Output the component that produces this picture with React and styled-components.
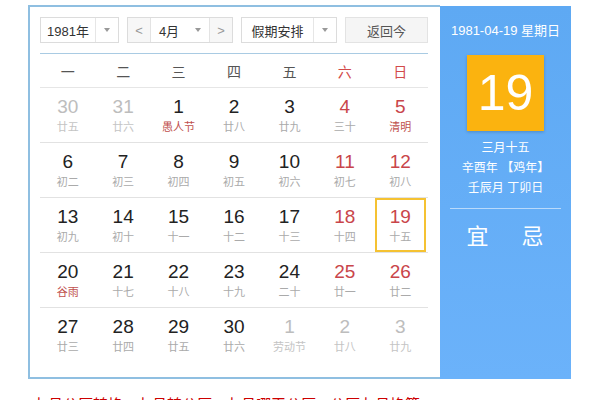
import React from 'react';
import styled, { createGlobalStyle } from 'styled-components';

const Global = createGlobalStyle`
  body {
    margin: 0;
    background: #fff;
    font-family: "Liberation Sans", Arial, "Noto Sans CJK SC", sans-serif;
  }
`;

const Page = styled.div`
  width: 600px;
  height: 400px;
  overflow: hidden;
  padding: 5px 0 0 28px;
  box-sizing: border-box;
`;

const Calendar = styled.div`
  display: flex;
  width: 543px;
  height: 374px;
`;

const Main = styled.div`
  width: 412px;
  box-sizing: border-box;
  border: 2px solid #8fbfe1;
  border-right: none;
  padding: 10px 12px 0 10px;
  background: #fff;
`;

const Toolbar = styled.div`
  display: flex;
  justify-content: space-between;
  height: 26px;
  padding-bottom: 10px;
  border-bottom: 1px solid #a9cbe3;
`;

const Select = styled.div`
  display: flex;
  width: ${p => p.w}px;
  height: 26px;
  box-sizing: border-box;
  border: 1px solid #dcdcdc;
  background: #fff;
  font-size: 13px;
  color: #333;
`;

const SelectText = styled.div`
  flex: 1;
  display: flex;
  align-items: center;
  justify-content: center;
`;

const Arrow = styled.div`
  width: 22px;
  display: flex;
  align-items: center;
  justify-content: center;
  border-left: ${p => (p.plain ? 'none' : '1px solid #e6e6e6')};
  &::after {
    content: '';
    border-left: 3px solid transparent;
    border-right: 3px solid transparent;
    border-top: 4px solid #999;
  }
`;

const Step = styled.div`
  width: 22px;
  display: flex;
  align-items: center;
  justify-content: center;
  background: #f7f7f7;
  color: #999;
  font-size: 13px;
  border-${p => p.side}: 1px solid #e3e3e3;
`;

const Button = styled.div`
  width: 83px;
  height: 26px;
  box-sizing: border-box;
  border: 1px solid #e3e3e3;
  background: #f5f5f5;
  color: #555;
  font-size: 13px;
  display: flex;
  align-items: center;
  justify-content: center;
`;

const Grid = styled.div`
  display: grid;
  grid-template-columns: repeat(7, 1fr);
`;

const WeekHead = styled(Grid)`
  height: 33px;
  border-bottom: 1px solid #e6e6e6;
`;

const WeekDay = styled.div`
  display: flex;
  align-items: center;
  justify-content: center;
  font-size: 14px;
  color: ${p => (p.red ? '#d24a4a' : '#555')};
`;

const Row = styled(Grid)`
  height: 55px;
  border-bottom: ${p => (p.last ? 'none' : '1px solid #e2e2e2')};
  box-sizing: border-box;
`;

const Cell = styled.div`
  display: flex;
  flex-direction: column;
  align-items: center;
  justify-content: center;
  margin: 0 2px;
  box-sizing: border-box;
  border: 2px solid ${p => (p.selected ? '#f5c232' : 'transparent')};
`;

const Num = styled.div`
  font-size: 19px;
  line-height: 22px;
  color: ${p => (p.tone === 'off' ? '#bdbdbd' : p.tone === 'red' ? '#c9454a' : '#222')};
`;

const Lunar = styled.div`
  font-size: 11px;
  line-height: 16px;
  margin-top: 1px;
  color: ${p => (p.red ? '#c0504d' : p.tone === 'off' ? '#c4c4c4' : '#aaa')};
`;

const Side = styled.div`
  width: 131px;
  margin-top: 1px;
  background: linear-gradient(#5ea9f3, #6bb2fa);
  display: flex;
  flex-direction: column;
  align-items: center;
  padding-top: 17px;
  box-sizing: border-box;
  color: #fff;
`;

const DateLine = styled.div`
  font-size: 13px;
  line-height: 16px;
`;

const BigDay = styled.div`
  width: 77px;
  height: 76px;
  margin-top: 16px;
  background: #fbb30f;
  box-shadow: 0 1px 3px rgba(0, 0, 0, 0.2);
  display: flex;
  align-items: center;
  justify-content: center;
  font-size: 50px;
  color: #fff;
`;

const LunarInfo = styled.div`
  margin-top: 7px;
  font-size: 12px;
  line-height: 20px;
  text-align: center;
`;

const Divider = styled.div`
  width: 111px;
  height: 1px;
  margin-top: 10px;
  background: rgba(255, 255, 255, 0.55);
`;

const Advice = styled.div`
  display: flex;
  gap: 32px;
  margin-top: 13px;
  font-size: 22px;
  line-height: 30px;
  letter-spacing: 1px;
`;

const Links = styled.div`
  display: flex;
  gap: 14px;
  margin: 14px 0 0 5px;
  font-size: 15px;
  color: #c00;
  white-space: nowrap;
`;

const weeks = [
  [
    ['30', '廿五', 'off'], ['31', '廿六', 'off'], ['1', '愚人节', '', true], ['2', '廿八'],
    ['3', '廿九'], ['4', '三十', 'red'], ['5', '清明', 'red', true],
  ],
  [
    ['6', '初二'], ['7', '初三'], ['8', '初四'], ['9', '初五'], ['10', '初六'],
    ['11', '初七', 'red'], ['12', '初八', 'red'],
  ],
  [
    ['13', '初九'], ['14', '初十'], ['15', '十一'], ['16', '十二'], ['17', '十三'],
    ['18', '十四', 'red'], ['19', '十五', 'red', false, true],
  ],
  [
    ['20', '谷雨', '', true], ['21', '十七'], ['22', '十八'], ['23', '十九'], ['24', '二十'],
    ['25', '廿一', 'red'], ['26', '廿二', 'red'],
  ],
  [
    ['27', '廿三'], ['28', '廿四'], ['29', '廿五'], ['30', '廿六'], ['1', '劳动节', 'off'],
    ['2', '廿八', 'off'], ['3', '廿九', 'off'],
  ],
];

const days = ['一', '二', '三', '四', '五', '六', '日'];
const links = ['九月公历转换', '九月转公历', '九月哪天公历', '公历九月换算'];

export default function App() {
  return (
    <Page>
      <Global />
      <Calendar>
        <Main>
          <Toolbar>
            <Select w={79}>
              <SelectText>1981年</SelectText>
              <Arrow />
            </Select>
            <Select w={106}>
              <Step side="right">&lt;</Step>
              <SelectText>4月</SelectText>
              <Arrow plain />
              <Step side="left">&gt;</Step>
            </Select>
            <Select w={96}>
              <SelectText>假期安排</SelectText>
              <Arrow />
            </Select>
            <Button>返回今</Button>
          </Toolbar>
          <WeekHead>
            {days.map((d, i) => (
              <WeekDay key={d} red={i > 4}>{d}</WeekDay>
            ))}
          </WeekHead>
          {weeks.map((week, r) => (
            <Row key={r} last={r === weeks.length - 1}>
              {week.map(([n, l, tone, holiday, selected], i) => (
                <Cell key={i} selected={selected}>
                  <Num tone={tone}>{n}</Num>
                  <Lunar tone={tone} red={holiday && tone !== 'off'}>{l}</Lunar>
                </Cell>
              ))}
            </Row>
          ))}
        </Main>
        <Side>
          <DateLine>1981-04-19 星期日</DateLine>
          <BigDay>19</BigDay>
          <LunarInfo>
            三月十五<br />
            辛酉年 【鸡年】<br />
            壬辰月 丁卯日
          </LunarInfo>
          <Divider />
          <Advice>
            <span>宜</span>
            <span>忌</span>
          </Advice>
        </Side>
      </Calendar>
      <Links>
        {links.map(t => (
          <span key={t}>{t}</span>
        ))}
      </Links>
    </Page>
  );
}
